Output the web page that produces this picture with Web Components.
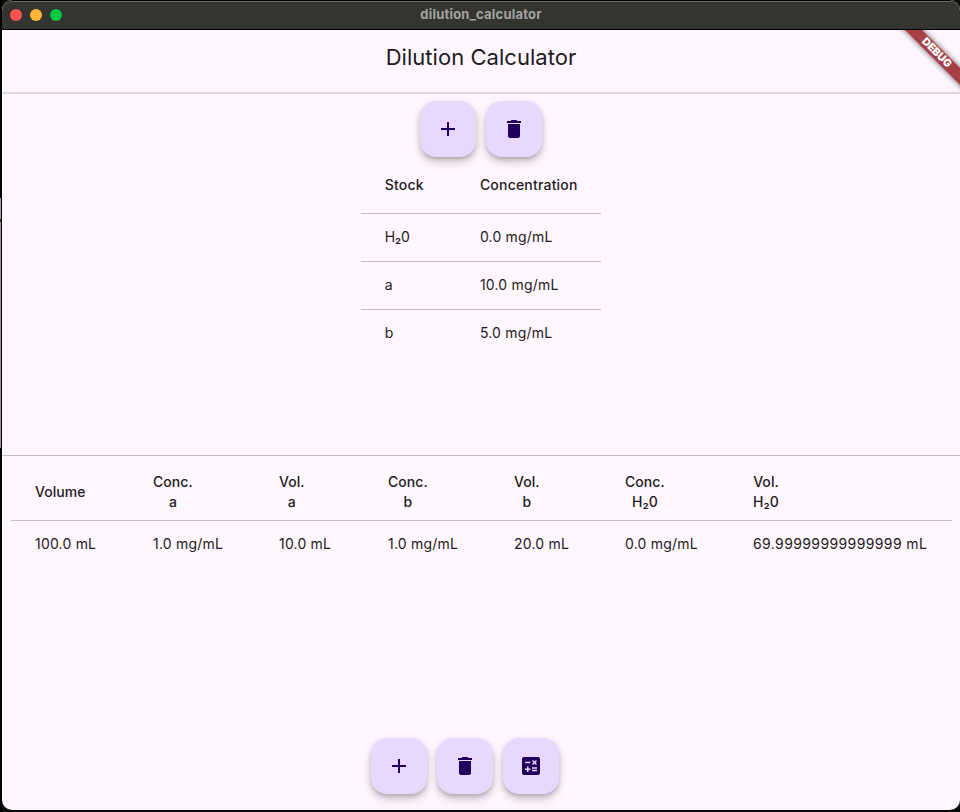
<!DOCTYPE html>
<html lang="en"><head><meta charset="utf-8"><title>dilution_calculator</title>
<style>
html,body{margin:0;height:100%;background:#000;overflow:hidden}
body{font-family:Inter,"Liberation Sans",sans-serif;font-size:14px;color:#1d1b20}
</style></head><body>
<app-window></app-window>
<script>
const define=(name,html,setup)=>customElements.define(name,class extends HTMLElement{
  connectedCallback(){
    if(this.shadowRoot)return;
    const root=this.attachShadow({mode:'open'});
    root.innerHTML=html;
    if(setup)setup(this,root);
  }
});

const icons={
  add:'M19 13h-6v6h-2v-6H5v-2h6V5h2v6h6v2z',
  delete:'M6 19c0 1.1.9 2 2 2h8c1.1 0 2-.9 2-2V7H6v12zM19 4h-3.5l-1-1h-5l-1 1H5v2h14V4z',
  calculate:'M19 3H5c-1.1 0-2 .9-2 2v14c0 1.1.9 2 2 2h14c1.1 0 2-.9 2-2V5c0-1.1-.9-2-2-2zM13.03 7.06L14.09 6l1.41 1.41L16.91 6l1.06 1.06-1.41 1.41 1.41 1.41-1.06 1.06-1.41-1.4-1.41 1.41-1.06-1.06 1.41-1.41-1.41-1.42zM6.25 7.72h5v1.5h-5v-1.5zM11.5 16h-2v2H8v-2H6v-1.5h2v-2h1.5v2h2V16zM18 17.25h-5v-1.5h5v1.5zM18 14.75h-5v-1.5h5v1.5z'
};
define('fab-button',`<style>
:host{display:block;width:56px;height:56px}
button{all:unset;box-sizing:border-box;display:grid;place-items:center;width:56px;height:56px;border-radius:16px;background:#e8d8fd;box-shadow:0 3px 5px -1px rgba(0,0,0,.2),0 6px 10px rgba(0,0,0,.14),0 1px 10px rgba(0,0,0,.06)}
svg{display:block;fill:#21005d}
</style><button><svg width="24" height="24" viewBox="0 0 24 24"><path/></svg></button>`,
(el,root)=>root.querySelector('path').setAttribute('d',icons[el.getAttribute('icon')]));

define('title-bar',`<style>
:host{display:grid;grid-template-columns:1fr auto 1fr;align-items:center;height:30px;box-sizing:border-box;background:#343431;border-top:1px solid #000;border-bottom:1px solid #000;box-shadow:inset 0 1px #6b6b69;border-radius:10px 10px 0 0}
.lights{display:flex;gap:8px;padding-left:8px}
i{width:12px;height:12px;border-radius:50%}
b{font-size:13px;line-height:16px;font-weight:700;color:#a3a3a1;letter-spacing:.21px;padding-bottom:2px}
</style><div class="lights"><i style="background:#ff5353"></i><i style="background:#ffb43c"></i><i style="background:#00c840"></i></div><b><slot></slot></b>`);

define('debug-banner',`<style>
:host{position:absolute;right:0;top:30px;width:76px;height:76px;overflow:hidden}
span{position:absolute;left:2px;top:16.5px;width:101px;height:12px;line-height:12px;text-align:center;transform:rotate(45deg);background:#a83f46;color:#fff;font-size:10.7px;font-weight:900;box-shadow:0 0 6px rgba(0,0,0,.6)}
</style><span>DEBUG</span>`);

define('app-header',`<style>
:host{display:flex;justify-content:center;align-items:center;height:54px;padding-bottom:8px;border-bottom:2px solid #ddd6de}
h1{margin:0;font-size:22px;line-height:28px;font-weight:400;letter-spacing:.04px}
</style><h1><slot></slot></h1>`);

define('data-row',`<style>
:host{display:grid;grid-template-columns:var(--cols);align-items:center;height:48px;box-sizing:border-box;padding:0 0 1px 24px;line-height:20px;letter-spacing:.2px;border-top:1px solid #c7bccb;white-space:nowrap}
:host([head]){height:56px;padding-bottom:0;font-weight:500;letter-spacing:.06px;border-top:0}
::slotted(span){justify-self:start;text-align:center;white-space:pre-line}
::slotted(.wide){letter-spacing:.38px}
::slotted(.label){letter-spacing:.2px}
::slotted(.formula){letter-spacing:-.1px}
</style><slot></slot>`);

define('data-table',`<style>
:host{display:flex;flex-direction:column}
</style><slot></slot>`);

define('app-window',`<style>
:host{display:block;position:relative;width:960px;height:812px;box-sizing:border-box;padding:0 0 2px 2px;background:linear-gradient(90deg,#000 0 1px,transparent 1px) 1px 0/1px 100% no-repeat,linear-gradient(#000 0 198px,#a29ca8 198px 219px,#222 219px 222px,#99919f 222px 448px,#000 448px) 0 0/1px 100% no-repeat,#080c08}
.window{display:flex;flex-direction:column;height:810px;background:#fff6ff;border-radius:10px;overflow:hidden}
.stocks{display:flex;flex-direction:column;align-items:center;box-sizing:border-box;height:361px;padding-top:7px}
.fabs{display:flex;gap:10px}
.stocks data-table{width:240.6px;--cols:95.2px 1fr}
.mix{display:flex;flex-direction:column;flex:1;border-top:1px solid #c2b9c5;padding:8px 9px 16px}
.mix data-table{width:940.5px;--cols:118px 126px 109px 126px 111px 128px 1fr}
.mix .fabs{margin:auto auto 0 360px}
</style>
<div class="window">
<title-bar>dilution_calculator</title-bar>
<app-header>Dilution Calculator</app-header>
<section class="stocks">
<div class="fabs"><fab-button icon="add"></fab-button><fab-button icon="delete"></fab-button></div>
<data-table>
<data-row head><span class="label">Stock</span><span class="label">Concentration</span></data-row>
<data-row><span class="formula">H₂0</span><span>0.0 mg/mL</span></data-row>
<data-row><span>a</span><span>10.0 mg/mL</span></data-row>
<data-row><span>b</span><span>5.0 mg/mL</span></data-row>
</data-table>
</section>
<section class="mix">
<data-table>
<data-row head><span>Volume</span><span>Conc.
a</span><span>Vol.
a</span><span>Conc.
b</span><span>Vol.
b</span><span>Conc.
H₂0</span><span>Vol.
H₂0</span></data-row>
<data-row><span>100.0 mL</span><span>1.0 mg/mL</span><span>10.0 mL</span><span>1.0 mg/mL</span><span>20.0 mL</span><span>0.0 mg/mL</span><span class="wide">69.99999999999999 mL</span></data-row>
</data-table>
<div class="fabs"><fab-button icon="add"></fab-button><fab-button icon="delete"></fab-button><fab-button icon="calculate"></fab-button></div>
</section>
</div>
<debug-banner></debug-banner>`);
</script>
</body></html>
